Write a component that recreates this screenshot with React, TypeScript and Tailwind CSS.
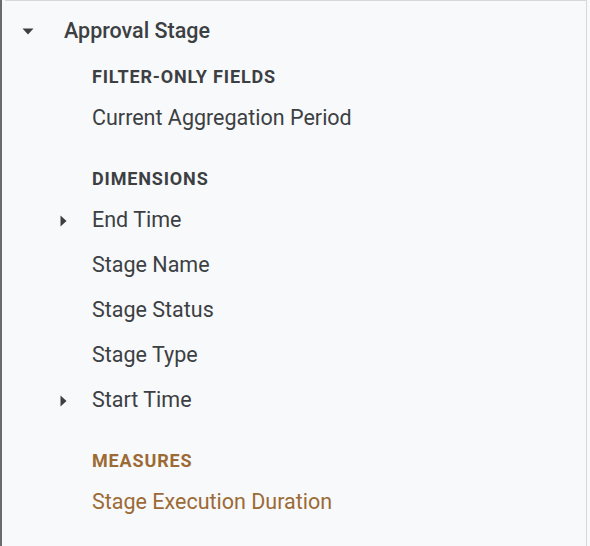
import React from "react";

const Caret = ({ dir }: { dir: "down" | "right" }) =>
  dir === "down" ? (
    <svg width="12" height="7" viewBox="0 0 12 7" className="block">
      <path d="M0.5 0.5 L11.5 0.5 L6 6.5 Z" fill="#3c4043" />
    </svg>
  ) : (
    <svg width="7" height="12" viewBox="0 0 7 12" className="block">
      <path d="M0.5 0.5 L6.5 6 L0.5 11.5 Z" fill="#3c4043" />
    </svg>
  );

const Item = ({ label, expandable, color }: { label: string; expandable?: boolean; color?: string }) => (
  <div className="flex h-[45px] items-center">
    <div className="w-[87px] pl-[55px]">{expandable ? <Caret dir="right" /> : null}</div>
    <span className={`text-[21.5px] ${color ?? "text-[#3c4043]"}`}>{label}</span>
  </div>
);

const Label = ({ label, color }: { label: string; color?: string }) => (
  <div className="mb-[6px] flex h-[28px] items-center pl-[87px]">
    <span className={`text-[18px] font-bold tracking-[0.85px] ${color ?? "text-[#3c4043]"}`}>{label}</span>
  </div>
);

export default function App() {
  return (
    <div
      className="h-[546px] w-[590px] border-l-2 border-[#6b6b6b] bg-[#f8f9fb]"
      style={{ fontFamily: "Roboto, 'Noto Sans', sans-serif" }}
    >
      <div className="ml-[3px] h-full w-[582px] border-r border-t border-[#d6d8dc]">
        <div className="flex h-[61px] items-center">
          <div className="w-[59px] pl-[17px]">
            <Caret dir="down" />
          </div>
          <span className="text-[21.5px] font-medium text-[#3c4043]">Approval Stage</span>
        </div>
        <Label label="FILTER-ONLY FIELDS" />
        <Item label="Current Aggregation Period" />
        <div className="h-[23px]" />
        <Label label="DIMENSIONS" />
        <Item label="End Time" expandable />
        <Item label="Stage Name" />
        <Item label="Stage Status" />
        <Item label="Stage Type" />
        <Item label="Start Time" expandable />
        <div className="h-[23px]" />
        <Label label="MEASURES" color="text-[#9c6a35]" />
        <Item label="Stage Execution Duration" color="text-[#9c6a35]" />
      </div>
    </div>
  );
}
